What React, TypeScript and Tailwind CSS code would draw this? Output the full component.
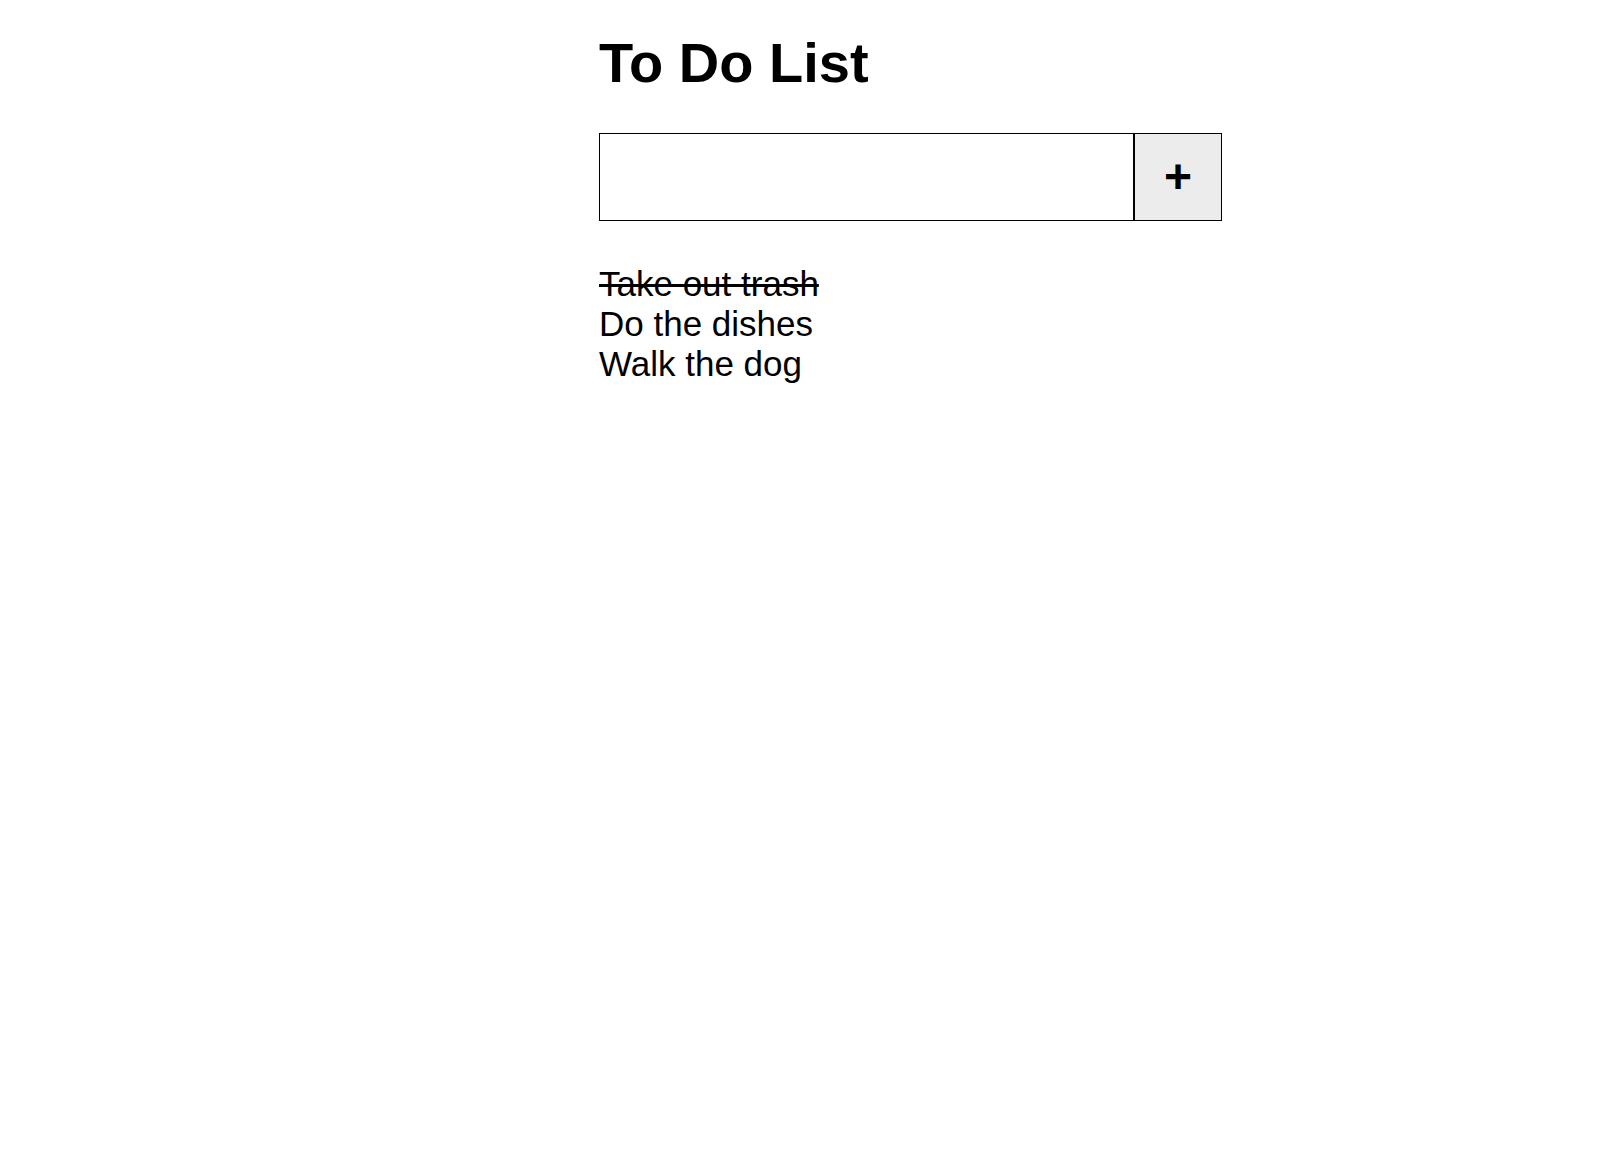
import { useState } from 'react';

interface todo {
  id: number,
  text: string,
  done: boolean
}

const App = () => {
  const [todos, setTodos] = useState<todo[]>([
    { id: 1, text: 'Take out trash', done: true },
    { id: 2, text: 'Do the dishes', done: false },
    { id: 3, text: 'Walk the dog', done: false },
  ]);
  const [inputValue, setInputValue] = useState('');

  const handleAdd = () => {
    if (inputValue.trim()) {
      setTodos([...todos, { id: todos.length + 1, text: inputValue, done: false }]);
      setInputValue('');
    }
  };

  const toggle = (id: number) => {
    setTodos(todos.map((t) => (t.id === id ? { ...t, done: !t.done } : t)));
  };

  return (
    <div className="min-h-screen bg-white text-black font-['Liberation_Sans',Arial,sans-serif]">
      <div className="ml-[599px] w-[623px] pt-[31px]">
        {/* Header */}
        <h1 className="text-[56px] leading-[64px] font-bold">To Do List</h1>

        {/* Input */}
        <div className="flex mt-[38px] h-[88px]">
          <input
            type="text"
            value={inputValue}
            onChange={(e) => setInputValue(e.target.value)}
            onKeyDown={(e) => e.key === 'Enter' && handleAdd()}
            className="flex-1 min-w-0 border border-black px-3 text-[35px] outline-none"
          />
          <button
            onClick={handleAdd}
            className="w-[88px] border border-black bg-[#ececec] text-[48px] font-bold leading-none flex items-center justify-center"
          >
            +
          </button>
        </div>

        {/* List */}
        <ul className="mt-[43px]">
          {todos.map((t) => (
            <li
              key={t.id}
              onClick={() => toggle(t.id)}
              className={`text-[35px] leading-[40px] cursor-pointer ${t.done ? 'line-through' : ''}`}
            >
              {t.text}
            </li>
          ))}
        </ul>
      </div>
    </div>
  );
};

export default App;
